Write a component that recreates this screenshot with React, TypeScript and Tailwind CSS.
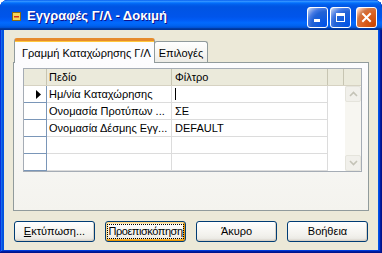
import React from "react";

const font = { fontFamily: '"Liberation Sans", Arial, sans-serif' };

function WinBtn({ kind }: { kind: "min" | "max" | "close" }) {
  const base =
    kind === "close"
      ? "bg-[radial-gradient(circle_at_90%_90%,#cc4600_0%,#dc6527_55%,#cd7546_70%,#ffccb2_90%,#ffffff_100%)]"
      : "bg-[radial-gradient(circle_at_90%_90%,#0054e9_0%,#2263d5_55%,#4479e4_70%,#a3bbec_90%,#ffffff_100%)]";
  return (
    <div
      className={`w-[21px] h-[21px] rounded-[3px] border border-white flex items-center justify-center ${base}`}
    >
      {kind === "min" && (
        <svg width="13" height="13" viewBox="0 0 13 13">
          <rect x="3" y="8" width="6" height="3" fill="#fff" />
        </svg>
      )}
      {kind === "max" && (
        <svg width="13" height="13" viewBox="0 0 13 13">
          <rect x="2.5" y="2.5" width="8" height="8" fill="none" stroke="#fff" strokeWidth="1" />
          <rect x="2" y="2" width="9" height="3" fill="#fff" />
        </svg>
      )}
      {kind === "close" && (
        <svg width="13" height="13" viewBox="0 0 13 13">
          <path d="M3 3 L10 10 M10 3 L3 10" stroke="#fff" strokeWidth="2" strokeLinecap="square" />
        </svg>
      )}
    </div>
  );
}

function Button({
  children,
  focused,
}: {
  children: React.ReactNode;
  focused?: boolean;
}) {
  return (
    <div
      className={`w-[81px] h-[21px] rounded-[3px] border border-[#003c74] bg-[linear-gradient(180deg,#ffffff_0%,#f2f1ec_70%,#ecebe6_86%,#d6d0c5_100%)] flex items-center justify-center text-[11px] text-black ${
        focused
          ? "shadow-[inset_-1px_-1px_#e5970b,inset_1px_1px_#fdd889,inset_-2px_-2px_#f8b330,inset_2px_2px_#fce7b6]"
          : "shadow-[inset_-1px_-1px_#d6d0c5]"
      }`}
    >
      {focused ? (
        <span className="border border-dotted border-black leading-[13px] tracking-[-0.45px] whitespace-nowrap">
          {children}
        </span>
      ) : (
        children
      )}
    </div>
  );
}

function Chevron({ up }: { up?: boolean }) {
  return (
    <svg width="9" height="6" viewBox="0 0 9 6">
      <path
        d={up ? "M1 5 L4.5 1.5 L8 5" : "M1 1 L4.5 4.5 L8 1"}
        fill="none"
        stroke="#c4c3b7"
        strokeWidth="1.6"
      />
    </svg>
  );
}

const rows: { f: string; v: string; cur?: boolean }[] = [
  { f: "Ημ/νία Καταχώρησης", v: "", cur: true },
  { f: "Ονομασία Προτύπων ...", v: "ΣΕ" },
  { f: "Ονομασία Δέσμης Εγγ...", v: "DEFAULT" },
  { f: "", v: "" },
  { f: "", v: "" },
];

export default function App() {
  return (
    <div
      style={font}
      className="w-[382px] h-[253px] flex flex-col rounded-t-[8px] overflow-hidden bg-[#0054e3] shadow-[inset_-1px_-1px_#00138c,inset_1px_1px_#0831d9,inset_-2px_-2px_#001ea0,inset_2px_2px_#166aee,inset_-3px_-3px_#003bda,inset_3px_3px_#0855dd]"
    >
      {/* Title bar */}
      <div className="h-[30px] shrink-0 flex items-center pl-[12px] pr-[5px] bg-[linear-gradient(180deg,#0058ee_0%,#3593ff_4%,#288eff_6%,#127dff_8%,#036ffc_10%,#0262ee_14%,#0057e5_20%,#0054e3_24%,#0055eb_56%,#005bf5_66%,#026afe_76%,#0062ef_86%,#0052d6_92%,#0040ab_94%,#003092_100%)]">
        <svg width="9" height="9" viewBox="0 0 9 9" className="shrink-0 mt-[2px]">
          <rect x="0.5" y="0.5" width="8" height="8" fill="#f6d65a" stroke="#8a6a10" />
          <rect x="2" y="4" width="5" height="1.5" fill="#d2301c" />
        </svg>
        <div className="ml-[6px] mt-[2px] text-white font-bold text-[13px] [text-shadow:1px_1px_#0f1089]">
          Εγγραφές Γ/Λ - Δοκιμή
        </div>
        <div className="ml-auto mt-[4px] flex gap-[2px] items-center">
          <WinBtn kind="min" />
          <WinBtn kind="max" />
          <div className="w-[1px]" />
          <WinBtn kind="close" />
        </div>
      </div>

      {/* Body */}
      <div className="flex-1 mx-[4px] mb-[4px] bg-[#ece9d8] flex flex-col pt-[8px] px-[9px] pb-[8px]">
        {/* Tabs */}
        <div className="h-[24px] flex items-end pl-[1px] text-[11px] text-black">
          <div className="relative z-10 h-[25px] -mb-[1px] w-[141px] rounded-t-[3px] border-t-[3px] border-t-[#e68b2c] border-x border-x-[#919b9c] bg-[#fcfcfe] shadow-[inset_0_1px_#ffc73c] flex items-start pt-[4px] pl-[7px]">
            Γραμμή Καταχώρησης Γ/Λ
          </div>
          <div className="h-[21px] w-[54px] -ml-[1px] rounded-t-[3px] border border-b-0 border-[#919b9c] bg-[linear-gradient(180deg,#ffffff_0%,#f6f5f1_60%,#ecebe5_100%)] flex items-center justify-center pt-[2px]">
            Επιλογές
          </div>
        </div>

        {/* Panel */}
        <div className="h-[149px] border border-[#919b9c] bg-[linear-gradient(180deg,#fcfcfe_0%,#f4f3ee_100%)] pt-[5px] pl-[9px]">
          <div className="w-[339px] border border-[#a5acb5] bg-white text-[11px] text-black">
            {/* header */}
            <div className="flex h-[17px] bg-[#ebeadb] border-b border-[#d6d2c2]">
              <div className="w-[23px] border-r border-[#c7c5b2]" />
              <div className="w-[125px] border-r border-[#c7c5b2] pl-[2px] leading-[17px]">Πεδίο</div>
              <div className="w-[156px] border-r border-[#c7c5b2] pl-[3px] leading-[17px]">Φίλτρο</div>
              <div className="w-[16px] border-r border-[#c7c5b2]" />
              <div className="flex-1" />
            </div>
            {/* body */}
            <div className="flex">
              <div className="flex flex-col w-[304px]">
                {rows.map((r, i) => (
                  <div key={i} className="flex h-[17px]">
                    <div className="w-[23px] border-r border-b border-[#7a96b8] flex items-center justify-end pr-[5px]">
                      {i === 0 && (
                        <svg width="5" height="9" viewBox="0 0 5 9">
                          <path d="M0 0 L5 4.5 L0 9 Z" fill="#000" />
                        </svg>
                      )}
                    </div>
                    <div className="w-[125px] border-r border-b border-[#dcdcdc] pl-[2px] leading-[17px] whitespace-nowrap overflow-hidden">
                      {r.f}
                    </div>
                    <div className="w-[156px] border-r border-b border-[#dcdcdc] pl-[3px] leading-[17px] flex items-center">
                      {r.cur ? <div className="w-[1px] h-[12px] bg-black" /> : r.v}
                    </div>
                  </div>
                ))}
              </div>
              <div className="w-[17px]" />
              <div className="w-[16px] bg-[#f7f6f1] flex flex-col justify-between">
                <div className="h-[16px] rounded-[2px] border border-[#e5e4dc] bg-[#f1f0eb] flex items-center justify-center">
                  <Chevron up />
                </div>
                <div className="h-[16px] rounded-[2px] border border-[#e5e4dc] bg-[#f1f0eb] flex items-center justify-center">
                  <Chevron />
                </div>
              </div>
            </div>
          </div>
        </div>

        {/* Buttons */}
        <div className="mt-[10px] flex justify-between px-[1px]">
          <Button>
            <span>
              <span className="underline">Ε</span>κτύπωση...
            </span>
          </Button>
          <Button focused>Προεπισκόπηση</Button>
          <Button>Άκυρο</Button>
          <Button>Βοήθεια</Button>
        </div>
      </div>
    </div>
  );
}
